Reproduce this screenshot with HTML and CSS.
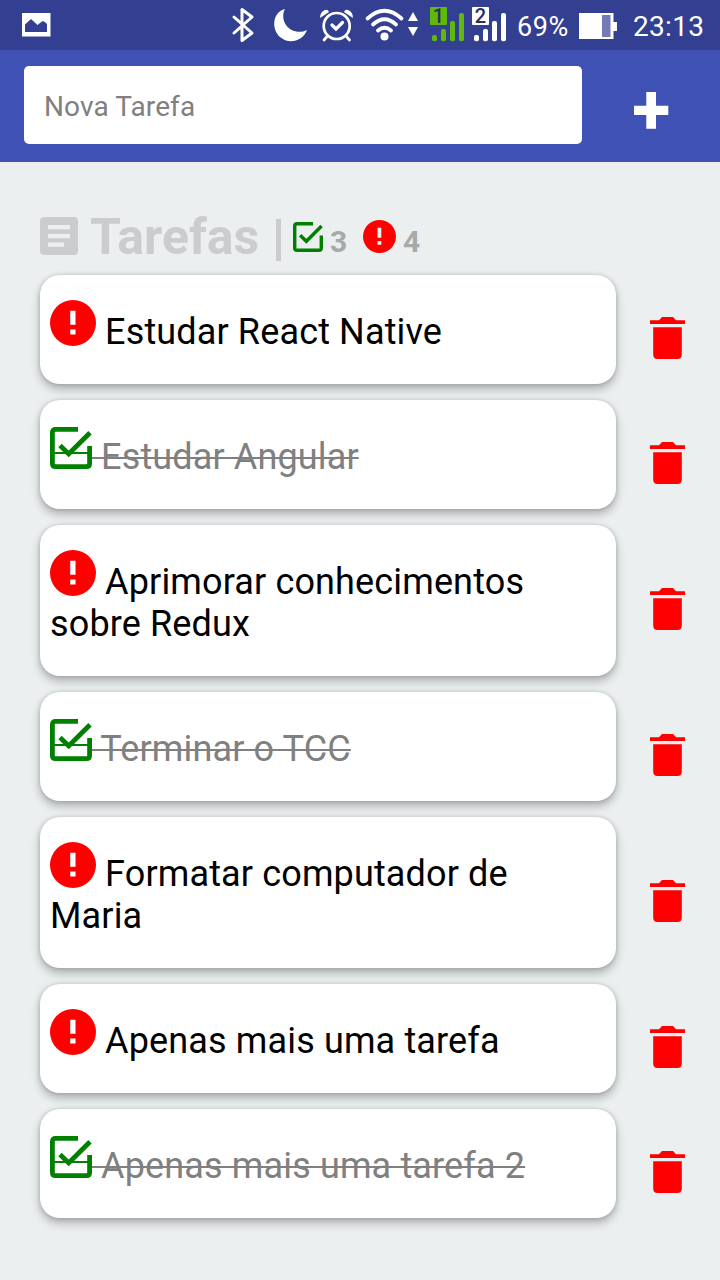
FILE: index.html
```
<!DOCTYPE html>
<html lang="pt-BR">
<head>
<meta charset="utf-8">
<title>Tarefas</title>
<link rel="stylesheet" href="styles.css">
</head>
<body>
<svg class="defs" aria-hidden="true">
  <symbol id="alert" viewBox="2 2 20 20"><path d="M12 2a10 10 0 1 0 0 20 10 10 0 0 0 0-20zm1.100 15h-2.300v-2.200h2.300zm0-4.200h-2.300v-6.100h2.300z"/></symbol>
  <symbol id="check" viewBox="0 0 42 42"><path d="M28 2.400H5.500Q2.400 2.400 2.400 5.500V36.500Q2.400 39.600 5.500 39.600H36.500Q39.600 39.600 39.600 36.500V19" fill="none" stroke="currentColor" stroke-width="4.800"/><path d="M10 18.500L18.700 27 40 5.700" fill="none" stroke="currentColor" stroke-width="4.800"/></symbol>
  <symbol id="trash" viewBox="0 0 36 42"><path d="M0 3.300H9L12 0H23L26 3.300H35V7H0zM3.200 10.300H31.800V37.500Q31.800 42 27.300 42H7.700Q3.200 42 3.200 37.500z"/></symbol>
</svg>
<div class="status">
  <svg class="photo" width="30" height="26" viewBox="21 12 30 26"><path d="M22 13h28.500v23.500h-28.500zM25 32h22v-8q-2-2.500-4.500-3l-5 4-6.500-6-6 5.500z" fill="#fff" fill-rule="evenodd"/></svg>
  <svg class="icons" width="280" height="50" viewBox="230 0 280 50">
    <path d="M234 17L252 33 242 40.500V9.500L252 17 234 33" fill="none" stroke="#fff" stroke-width="3" stroke-linecap="round" stroke-linejoin="round"/>
    <path d="M285 9C272.500 12 271 29 280 37 289 45 303 41 307 30 299 34 290 31 286 25 282.500 20 282.500 13 285 9z" fill="#fff"/>
    <g fill="none" stroke="#fff" stroke-width="2.700" stroke-linecap="round"><circle cx="336.700" cy="26" r="13"/><path d="M327.500 36l-3.500 4M346 36l3.500 4"/><path d="M332 25l4 4 6.500-6.500" stroke-width="3.200"/></g>
    <path d="M320 18q0-6 5-8 3-.8 4 2zM353 18q0-6-5-8-3-.8-4 2z" fill="#fff"/>
    <g fill="none" stroke="#fff" stroke-width="3.800" stroke-linecap="round"><path d="M367.500 18.500Q384.500 3 401.500 18.500M373 24.500Q384.500 14 396 24.500M378 30.500Q384.500 25 391 30.500"/></g>
    <circle cx="384.500" cy="36.500" r="4" fill="#fff"/>
    <path d="M408 21l5-9 5 9zM408 27h10l-5 9z" fill="#fff"/>
    <g fill="#5fb80b"><rect x="430" y="7" width="17" height="18" rx="1"/><rect x="432" y="35" width="5" height="6.300" rx="2"/><rect x="441" y="29" width="5" height="12.300" rx="2"/><rect x="450" y="21" width="5" height="20.300" rx="2"/><rect x="459" y="13" width="5" height="28.300" rx="2"/></g>
    <g fill="#fff"><rect x="472" y="7" width="17" height="18" rx="1"/><rect x="474" y="35" width="5" height="6.300" rx="2"/><rect x="483" y="29" width="5" height="12.300" rx="2"/><rect x="492" y="21" width="5" height="20.300" rx="2"/><rect x="501" y="13" width="5" height="28.300" rx="2"/></g>
    <text class="sim" x="438.500" y="22.800">1</text><text class="sim" x="480.500" y="22.800">2</text>
  </svg>
  <span class="percent">69%</span>
  <svg class="battery" width="38" height="26" viewBox="0 0 38 26"><path d="M0 0H34.500V9H38V18H34.500V26H0z" fill="#fff"/><rect x="23" y="2" width="8.500" height="22" fill="#727bb5"/></svg>
  <span class="clock">23:13</span>
</div>
<header class="bar">
  <div class="field">Nova Tarefa</div>
  <svg class="plus" width="35" height="37" viewBox="0 0 35 37"><path d="M12.300 0h9.700v13.800H34.300v9.200H22v13.700h-9.700V23H0v-9.200h12.300z" fill="#fff"/></svg>
</header>
<main class="main">
  <h1 class="title">
    <svg class="doc" width="38" height="38" viewBox="0 0 38 38"><path fill-rule="evenodd" d="M4 0H34Q38 0 38 4V34Q38 38 34 38H4Q0 38 0 34V4Q0 0 4 0zM8 8v4.300h22V8zM8 17v4.300h22V17zM8 25.500v4.300h16v-4.300z"/></svg>
    <span class="name">Tarefas</span><span class="pipe"></span>
    <svg class="mini-check"><use href="#check"/></svg><span class="count done-count">3</span>
    <svg class="mini-alert"><use href="#alert"/></svg><span class="count">4</span>
  </h1>
  <div class="list">
    <div class="row"><div class="card"><svg class="alert"><use href="#alert"/></svg> Estudar React Native</div><svg class="trash"><use href="#trash"/></svg></div>
    <div class="row"><div class="card done"><span class="tick"><svg><use href="#check"/></svg></span><s> Estudar Angular</s></div><svg class="trash"><use href="#trash"/></svg></div>
    <div class="row"><div class="card"><svg class="alert"><use href="#alert"/></svg> Aprimorar conhecimentos<br>sobre Redux</div><svg class="trash"><use href="#trash"/></svg></div>
    <div class="row"><div class="card done"><span class="tick"><svg><use href="#check"/></svg></span><s> Terminar o TCC</s></div><svg class="trash"><use href="#trash"/></svg></div>
    <div class="row"><div class="card"><svg class="alert"><use href="#alert"/></svg> Formatar computador de<br>Maria</div><svg class="trash"><use href="#trash"/></svg></div>
    <div class="row"><div class="card"><svg class="alert"><use href="#alert"/></svg> Apenas mais uma tarefa</div><svg class="trash"><use href="#trash"/></svg></div>
    <div class="row"><div class="card done"><span class="tick"><svg><use href="#check"/></svg></span><s> Apenas mais uma tarefa 2</s></div><svg class="trash"><use href="#trash"/></svg></div>
  </div>
</main>
</body>
</html>
```

FILE: styles.css
```
* { box-sizing: border-box; }
body { margin: 0; height: 1280px; overflow: hidden; background: #ebeff0; font-family: Roboto, sans-serif; }
.defs { display: none; }

.status { display: flex; align-items: center; height: 50px; padding-left: 21px; background: #334091; color: #fff; font-size: 28px; white-space: nowrap; }
.status svg { flex: none; }
.icons { margin-left: 179px; }
.sim { font: 500 20px Roboto, sans-serif; text-anchor: middle; fill: #26335c; }
.percent { width: 62px; margin-left: 7px; padding-top: 3px; font-size: 27px; letter-spacing: .6px; }
.battery { margin-top: 1px; }
.clock { margin-left: 16px; padding-top: 2px; letter-spacing: .3px; }

.bar { display: flex; align-items: flex-start; height: 112px; padding: 16px 24px; background: #3f51b5; }
.field { width: 558px; height: 78px; padding-left: 20px; border-radius: 5px; background: #fff; color: #808080; font-size: 28px; line-height: 82px; letter-spacing: .1px; }
.plus { margin: 26px 0 0 52px; }

.main { padding: 0 0 0 40px; }
.title { display: flex; align-items: flex-start; height: 113px; margin: 0; color: #cbcccd; }
.title svg { flex: none; }
.doc { margin-top: 55px; fill: #cbcccd; }
.name { width: 186px; margin-left: 12px; padding-top: 47px; font-size: 50px; line-height: 57px; }
.pipe { width: 5px; height: 42px; margin-top: 57px; background: #cbcccd; }
.mini-check { width: 30px; height: 30px; margin: 60px 0 0 12px; color: green; }
.mini-alert { width: 33px; height: 33px; margin: 58px 0 0 7px; fill: red; }
.count { margin: 62px 0 0 7px; color: #a7a9aa; font-size: 30px; line-height: 36px; }
.done-count { width: 26px; }

.list { display: flex; flex-direction: column; gap: 16px; }
.row { display: flex; align-items: center; }
.card { width: 576px; padding: 36px 10px 31px; border-radius: 20px; background: #fff; box-shadow: 0 5px 10px rgba(0,0,0,.27), 0 0 4px rgba(0,0,0,.16); color: #000; font-size: 36px; line-height: 42px; letter-spacing: .14px; white-space: nowrap; }
.alert { width: 46px; height: 46px; margin-top: -20px; vertical-align: -2px; fill: red; }
.done { color: #808080; }
.done s { text-decoration-thickness: 2px; white-space: pre; }
.tick { display: inline-block; width: 42px; height: 42px; margin-top: -20px; vertical-align: 0; color: green; background: linear-gradient(green, green) 0 25px / 100% 2px no-repeat; }
.tick svg { display: block; width: 42px; height: 42px; }
.trash { width: 36px; height: 42px; margin: 17px 0 0 34px; fill: red; }
```
